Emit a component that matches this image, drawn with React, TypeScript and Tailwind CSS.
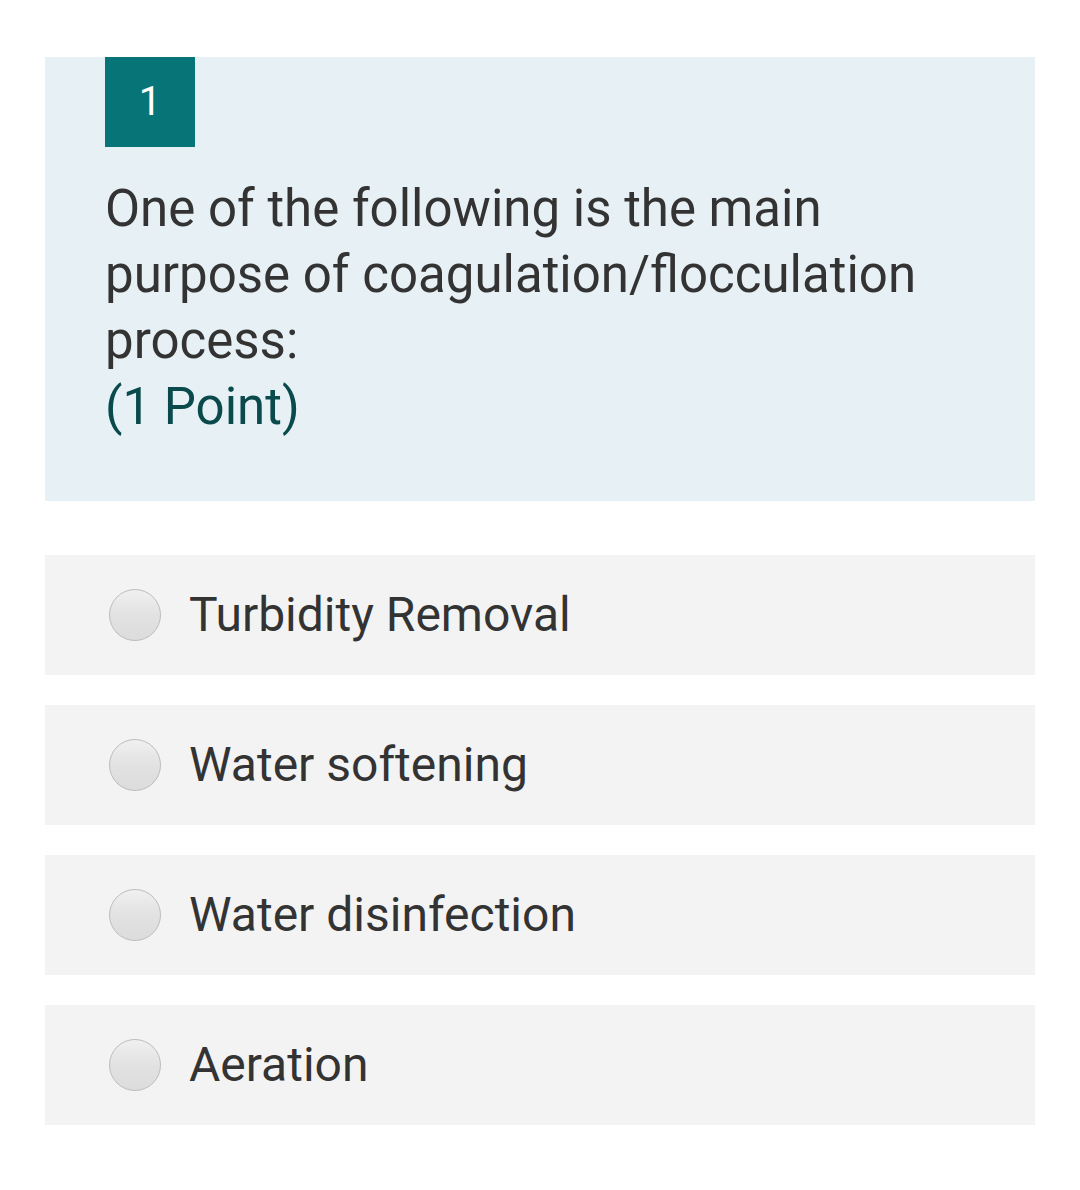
export default function App() {
  const options = ["Turbidity Removal", "Water softening", "Water disinfection", "Aeration"];

  return (
    <div className="min-h-[1190px] w-[1080px] bg-white pt-[57px] px-[45px] font-['Roboto',sans-serif]">
      {/* QUESTION */}
      <div className="bg-[#e7f0f4] pl-[60px] pr-[100px] pb-[61px]">
        <div className="w-[90px] h-[90px] bg-[#077578] text-white flex items-center justify-center text-[40px]">1</div>
        <div className="mt-[29px] text-[51px] leading-[66px] text-[#333333]">
          One of the following is the main purpose of coagulation/flocculation process:
          <div className="text-[#0a4a4c]">(1 Point)</div>
        </div>
      </div>

      {/* OPTIONS */}
      <div className="mt-[54px] flex flex-col gap-[30px]">
        {options.map((o) => (
          <div key={o} className="h-[120px] bg-[#f3f3f3] flex items-center pl-[64px]">
            <span className="w-[52px] h-[52px] rounded-full border border-[#bdbdbd] bg-gradient-to-b from-[#f0f0f0] via-[#e2e2e2] to-[#dcdcdc] shrink-0" />
            <span className="ml-[28px] text-[48px] text-[#333333]">{o}</span>
          </div>
        ))}
      </div>
    </div>
  );
}
